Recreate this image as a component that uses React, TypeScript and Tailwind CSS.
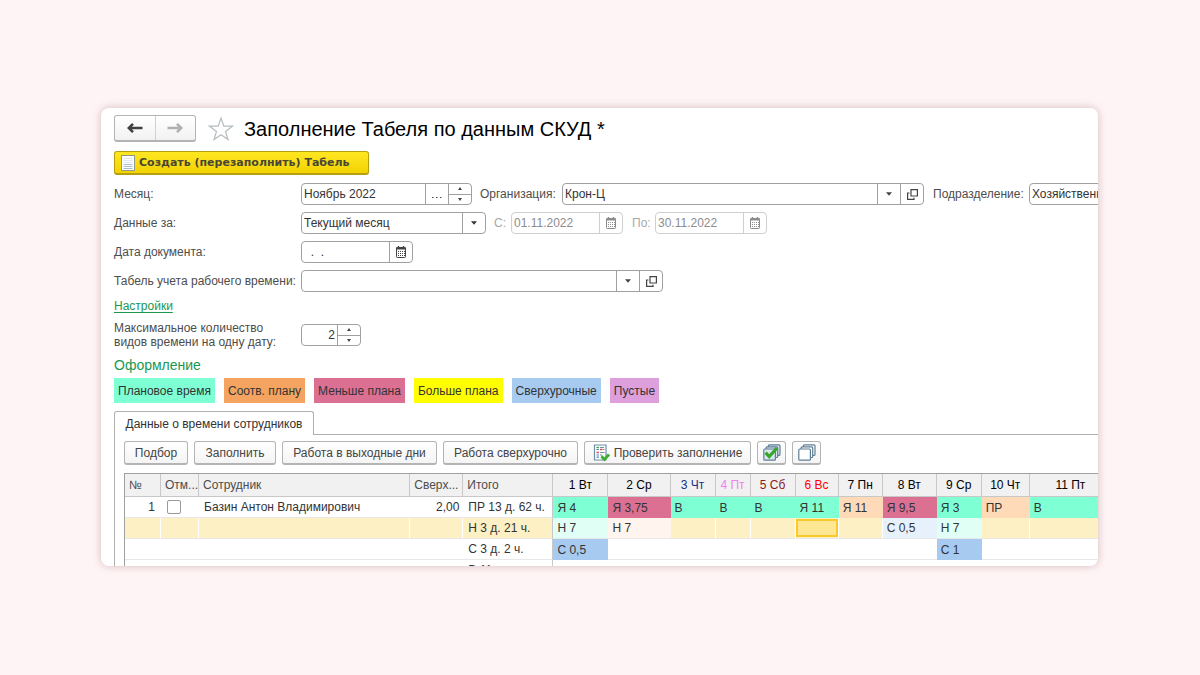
import { useState } from "react";
import type { ReactNode } from "react";
import clsx from "clsx";

const legend = [
  { label: "Плановое время", color: "bg-[#7fffd4]" },
  { label: "Соотв. плану", color: "bg-[#f4a460]" },
  { label: "Меньше плана", color: "bg-[#db7093]" },
  { label: "Больше плана", color: "bg-[#ffff00]" },
  { label: "Сверхурочные", color: "bg-[#a6caf0]" },
  { label: "Пустые", color: "bg-[#dda0dd]" },
];

const days = [
  { label: "1 Вт", color: "text-black", width: "w-[55px]" },
  { label: "2 Ср", color: "text-black", width: "w-[62px]" },
  { label: "3 Чт", color: "text-[#1c2f8c]", width: "w-[45px]" },
  { label: "4 Пт", color: "text-[#ee82ee]", width: "w-[35px]" },
  { label: "5 Сб", color: "text-[#8b1a1a]", width: "w-[45px]" },
  { label: "6 Вс", color: "text-[#ff0000]", width: "w-[43px]" },
  { label: "7 Пн", color: "text-black", width: "w-[44px]" },
  { label: "8 Вт", color: "text-black", width: "w-[54px]" },
  { label: "9 Ср", color: "text-black", width: "w-[45px]" },
  { label: "10 Чт", color: "text-black", width: "w-[48px]" },
  { label: "11 Пт", color: "text-black", width: "w-[82px]" },
];

const MINT = "bg-[#7fffd4]";
const ROSE = "bg-[#db7093]";
const PEACH = "bg-[#ffdab9]";
const BLUE = "bg-[#a6caf0]";

type Cell = { text?: string; bg?: string; active?: boolean };

const planned: Cell[] = [
  { text: "Я 4", bg: MINT },
  { text: "Я 3,75", bg: ROSE },
  { text: "В", bg: MINT },
  { text: "В", bg: MINT },
  { text: "В", bg: MINT },
  { text: "Я 11", bg: MINT },
  { text: "Я 11", bg: PEACH },
  { text: "Я 9,5", bg: ROSE },
  { text: "Я 3", bg: MINT },
  { text: "ПР", bg: PEACH },
  { text: "В", bg: MINT },
];

const night: Cell[] = [
  { text: "Н 7", bg: "bg-[#e0fff5]" },
  { text: "Н 7", bg: "bg-[#fff5ee]" },
  {},
  {},
  {},
  { active: true },
  {},
  { text: "С 0,5", bg: "bg-[#e7f1fb]" },
  { text: "Н 7", bg: "bg-[#e0fff5]" },
  {},
  {},
];

const overtime: Cell[] = [
  { text: "С 0,5", bg: BLUE },
  {},
  {},
  {},
  {},
  {},
  {},
  {},
  { text: "С 1", bg: BLUE },
  {},
  {},
];

const rows = [
  { total: "ПР 13 д. 62 ч.", cells: planned },
  { total: "Н 3 д. 21 ч.", cells: night, selected: true },
  { total: "С 3 д. 2 ч.", cells: overtime },
  { total: "В 11 д.", cells: days.map((): Cell => ({})) },
];

/* ---- icons ---- */

function ArrowIcon({ right }: { right?: boolean }) {
  return (
    <svg width="16" height="12" viewBox="0 0 16 12" className={right ? "rotate-180" : ""}>
      <path d="M6 1.8 1.8 6 6 10.2M2 6h13.5" fill="none" stroke="currentColor" strokeWidth="2.6" />
    </svg>
  );
}

function StarIcon() {
  return (
    <svg width="26" height="26" viewBox="0 0 26 26">
      <path
        d="M13 2 15.8 10.1 24.4 10.2 17.5 15.4 20 23.6 13 18.7 6 23.6 8.5 15.4 1.6 10.2 10.2 10.1Z"
        fill="#fff"
        stroke="#b4bcc0"
        strokeWidth="1.2"
      />
    </svg>
  );
}

function SheetIcon() {
  return (
    <svg width="14" height="16" viewBox="0 0 14 16">
      <rect x="0.5" y="0.5" width="13" height="15" fill="#fdfeff" stroke="#8f9a8c" />
      <path d="M2.5 3.5h9M2.5 5.5h9M2.5 7.5h9" stroke="#dfe7ee" />
      <path d="M2.5 9.5h9M2.5 11.5h9M2.5 13.5h9" stroke="#a9bccd" />
    </svg>
  );
}

function CalendarIcon() {
  return (
    <svg width="12" height="12" viewBox="0 0 12 12">
      <path d="M3.5 0v2M8.5 0v2" stroke="currentColor" strokeWidth="1.4" />
      <rect x="1.5" y="1.5" width="9" height="10" rx="0.8" fill="none" stroke="currentColor" />
      <path d="M1 2.5h10" stroke="currentColor" strokeWidth="2" />
      <path d="M3 5.5h7M3 7.5h7M3 9.5h7" stroke="currentColor" strokeDasharray="1 1" />
    </svg>
  );
}

function OpenIcon() {
  return (
    <svg width="11" height="11" viewBox="0 0 11 11">
      <path d="M4 .6h6.4V7H4Z" fill="none" stroke="currentColor" strokeWidth="1.2" />
      <path d="M2.5 4H.6v6.4H7V8.8" fill="none" stroke="currentColor" strokeWidth="1.2" />
    </svg>
  );
}

function CaretIcon() {
  return (
    <svg width="6" height="4" viewBox="0 0 6 4">
      <path d="M0 .3h6L3 3.7Z" fill="currentColor" />
    </svg>
  );
}

function CheckDocIcon() {
  return (
    <svg width="17" height="18" viewBox="0 0 17 18">
      <path d="M1.5 1h11.5v15H1.5Z" fill="#fff" stroke="#6f8fa6" strokeWidth="1.2" />
      <path d="M3.5 3.5H6" stroke="#3aa23a" strokeWidth="1.4" />
      <path d="M7 5.5h2.5M3.5 8.5H6" stroke="#d0545a" strokeWidth="1.4" />
      <path d="M3.5 5.5H6M3.5 11H6M3.5 13.2H6" stroke="#5b86b8" strokeWidth="1.2" />
      <path d="M7 3.5h4M10 5.5h1.5M7 8.5h4.5M7 11h2" stroke="#6d8db0" />
      <path d="m8.4 12.2 3 3.2L16 10.4" fill="none" stroke="#3fae2f" strokeWidth="2.8" />
    </svg>
  );
}

function StackIcon({ checked }: { checked?: boolean }) {
  return (
    <svg width="18" height="17" viewBox="0 0 18 17">
      <g fill={checked ? "#dbe6ee" : "#fff"} stroke="#5f7f96" strokeWidth="1.2">
        <rect x="5.4" y=".8" width="11.6" height="10.6" rx="1" />
        <rect x="3.1" y="2.9" width="11.6" height="10.6" rx="1" />
        <rect x=".8" y="5" width="11.6" height="11.2" rx="1" />
      </g>
      {checked && (
        <path d="m2.6 8.6 3.6 4L14 4" fill="none" stroke="#35a82a" strokeWidth="3.2" />
      )}
    </svg>
  );
}

/* ---- form pieces ---- */

function Field({
  className,
  disabled,
  children,
}: {
  className: string;
  disabled?: boolean;
  children: ReactNode;
}) {
  return (
    <div
      className={clsx(
        "flex h-[22px] shrink-0 overflow-hidden rounded-[4px] border bg-white",
        disabled ? "border-[#cfcfcf] text-[#8c8c8c]" : "border-[#a0a0a0] text-[#333]",
        className
      )}
    >
      {children}
    </div>
  );
}

function SideButton({
  label,
  disabled,
  children,
}: {
  label: string;
  disabled?: boolean;
  children: ReactNode;
}) {
  return (
    <button
      type="button"
      aria-label={label}
      disabled={disabled}
      className={clsx(
        "flex w-[23px] shrink-0 items-center justify-center border-l",
        disabled ? "border-[#cfcfcf]" : "border-[#a0a0a0] text-[#444]"
      )}
    >
      {children}
    </button>
  );
}

function Spinner({ onStep }: { onStep?: (step: number) => void }) {
  return (
    <div className="flex w-[23px] shrink-0 flex-col border-l border-[#a0a0a0] text-[#444]">
      <button
        type="button"
        aria-label="Увеличить"
        onClick={() => onStep?.(1)}
        className="flex flex-1 items-center justify-center border-b border-[#a0a0a0]"
      >
        <svg width="4" height="3" viewBox="0 0 4 3">
          <path d="M0 3h4L2 0Z" fill="currentColor" />
        </svg>
      </button>
      <button
        type="button"
        aria-label="Уменьшить"
        onClick={() => onStep?.(-1)}
        className="flex flex-1 items-center justify-center"
      >
        <svg width="4" height="3" viewBox="0 0 4 3">
          <path d="M0 0h4L2 3Z" fill="currentColor" />
        </svg>
      </button>
    </div>
  );
}

function DateField({
  id,
  value,
  disabled,
}: {
  id: string;
  value: string;
  disabled?: boolean;
}) {
  return (
    <Field className="w-28" disabled={disabled}>
      <input
        id={id}
        defaultValue={value}
        disabled={disabled}
        className="min-w-0 flex-1 px-0.5 outline-none"
      />
      <SideButton label="Выбрать дату" disabled={disabled}>
        <CalendarIcon />
      </SideButton>
    </Field>
  );
}

function ToolButton({
  className,
  label,
  children,
}: {
  className?: string;
  label?: string;
  children: ReactNode;
}) {
  return (
    <button
      type="button"
      aria-label={label}
      className={clsx(
        "flex h-6 shrink-0 items-center justify-center gap-1 rounded-[3px] border border-b-2 border-[#b4b4b4] bg-linear-to-b from-white to-[#f4f4f4] whitespace-nowrap text-[#444]",
        className
      )}
    >
      {children}
    </button>
  );
}

const rowLabel = "w-[187px] shrink-0 whitespace-nowrap";
const headCell = "border-r border-[#c8c8c8] px-1 text-left font-normal whitespace-nowrap";

export default function App() {
  const [maxKinds, setMaxKinds] = useState(2);
  const [marked, setMarked] = useState(false);

  return (
    <main className="flex h-screen flex-col bg-[#fff4f5] pt-[108px] pr-[102px] pb-[109px] pl-[101px] font-['Liberation_Sans',sans-serif] text-[12px] leading-4 text-[#4d4d4d]">
      <div className="min-h-0 flex-1 overflow-hidden rounded-lg bg-white pt-[7px] pl-[13px] shadow-[0_0_8px_rgba(110,60,70,0.3)]">
        {/* Title */}
        <div className="flex h-[27px] items-center">
          <div className="flex h-[27px] w-[82px] rounded-[3px] border border-b-2 border-[#b4b4b4] bg-linear-to-b from-white to-[#f2f2f2]">
            <button
              type="button"
              aria-label="Назад"
              className="flex flex-1 items-center justify-center border-r border-[#d0d0d0] text-[#404040]"
            >
              <ArrowIcon />
            </button>
            <button
              type="button"
              aria-label="Вперед"
              className="flex flex-1 items-center justify-center text-[#b0b0b0]"
            >
              <ArrowIcon right />
            </button>
          </div>
          <button type="button" aria-label="В избранное" className="mr-2.5 ml-3">
            <StarIcon />
          </button>
          <h1 className="text-[20px] leading-6 whitespace-nowrap text-black">
            Заполнение Табеля по данным СКУД *
          </h1>
        </div>

        <button
          type="button"
          className="mt-[9px] flex h-6 w-[255px] items-center gap-1 rounded-[3px] border border-b-2 border-[#b79f10] bg-linear-to-b from-[#ffe720] to-[#f2d300] pl-1.5 font-['DejaVu_Sans',sans-serif] text-[11px] font-bold whitespace-nowrap text-[#4a4636]"
        >
          <SheetIcon />
          Создать (перезаполнить) Табель
        </button>

        {/* Parameters */}
        <div className="mt-2 flex flex-col gap-[7px]">
          <div className="flex items-center">
            <label htmlFor="month" className={rowLabel}>
              Месяц:
            </label>
            <Field className="w-[171px]">
              <input
                id="month"
                defaultValue="Ноябрь 2022"
                className="min-w-0 flex-1 px-0.5 outline-none"
              />
              <SideButton label="Выбрать месяц">
                <svg width="10" height="10" viewBox="0 0 10 10">
                  <path d="M0 8.5h1.5M4 8.5h1.5M8 8.5h1.5" stroke="currentColor" />
                </svg>
              </SideButton>
              <Spinner />
            </Field>
            <label htmlFor="org" className="w-[90px] shrink-0 pl-2">
              Организация:
            </label>
            <Field className="w-[362px]">
              <input
                id="org"
                defaultValue="Крон-Ц"
                className="min-w-0 flex-1 px-0.5 outline-none"
              />
              <SideButton label="Выбрать организацию">
                <CaretIcon />
              </SideButton>
              <SideButton label="Открыть организацию">
                <OpenIcon />
              </SideButton>
            </Field>
            <label htmlFor="dept" className="w-[105px] shrink-0 pl-[9px]">
              Подразделение:
            </label>
            <Field className="w-[200px]">
              <input
                id="dept"
                defaultValue="Хозяйственный отдел"
                className="min-w-0 flex-1 px-0.5 outline-none"
              />
            </Field>
          </div>

          <div className="flex items-center">
            <label htmlFor="source" className={rowLabel}>
              Данные за:
            </label>
            <Field className="w-[185px]">
              <select id="source" className="min-w-0 flex-1 appearance-none px-0.5 outline-none">
                <option>Текущий месяц</option>
                <option>Прошлый месяц</option>
              </select>
              <span className="flex w-[23px] items-center justify-center border-l border-[#a0a0a0]">
                <CaretIcon />
              </span>
            </Field>
            <label htmlFor="from" className="w-[25px] shrink-0 pl-2 text-[#a8a8a8]">
              С:
            </label>
            <DateField id="from" value="01.11.2022" disabled />
            <label htmlFor="to" className="w-8 shrink-0 pl-[9px] text-[#a8a8a8]">
              По:
            </label>
            <DateField id="to" value="30.11.2022" disabled />
          </div>

          <div className="flex items-center">
            <label htmlFor="docdate" className={rowLabel}>
              Дата документа:
            </label>
            <DateField id="docdate" value="  .  ." />
          </div>

          <div className="flex items-center">
            <label htmlFor="sheet" className={rowLabel}>
              Табель учета рабочего времени:
            </label>
            <Field className="w-[362px]">
              <input id="sheet" className="min-w-0 flex-1 px-0.5 outline-none" />
              <SideButton label="Выбрать табель">
                <CaretIcon />
              </SideButton>
              <SideButton label="Открыть табель">
                <OpenIcon />
              </SideButton>
            </Field>
          </div>
        </div>

        <div className="mt-1.5 flex">
          <a href="#settings" className="text-[#1a9850] underline underline-offset-2">
            Настройки
          </a>
        </div>

        <div className="mt-[7px] flex items-center">
          <label htmlFor="kinds" className="w-[187px] shrink-0 leading-[14px]">
            Максимальное количество
            <br />
            видов времени на одну дату:
          </label>
          <Field className="w-[60px]">
            <input
              id="kinds"
              value={maxKinds}
              onChange={(e) => setMaxKinds(Number(e.target.value) || 0)}
              className="min-w-0 flex-1 px-0.5 text-right outline-none"
            />
            <Spinner onStep={(step) => setMaxKinds(maxKinds + step)} />
          </Field>
        </div>

        {/* Legend */}
        <h2 className="mt-[7px] text-[14px] leading-[18px] text-[#1a9850]">Оформление</h2>
        <div className="mt-1 flex gap-[9px]">
          {legend.map((item) => (
            <span
              key={item.label}
              className={clsx(
                "flex h-[25px] shrink-0 items-center px-1 whitespace-nowrap text-[#333]",
                item.color
              )}
            >
              {item.label}
            </span>
          ))}
        </div>

        {/* Tab */}
        <div className="mt-2 flex">
          <button
            type="button"
            className="h-6 w-[200px] shrink-0 rounded-t-[3px] border border-b-0 border-[#b0b0b0] whitespace-nowrap text-[#333]"
          >
            Данные о времени сотрудников
          </button>
          <div className="flex-1 border-b border-[#b0b0b0]" />
        </div>

        <div className="border-l border-[#b0b0b0] pt-1.5 pb-10 pl-[9px]">
          <div className="flex gap-1.5">
            <ToolButton className="w-16">Подбор</ToolButton>
            <ToolButton className="w-[82px]">Заполнить</ToolButton>
            <ToolButton className="w-[155px]">Работа в выходные дни</ToolButton>
            <ToolButton className="w-[135px]">Работа сверхурочно</ToolButton>
            <ToolButton className="w-[167px]">
              <CheckDocIcon />
              Проверить заполнение
            </ToolButton>
            <ToolButton className="w-[29px]" label="Отметить все">
              <StackIcon checked />
            </ToolButton>
            <ToolButton className="w-[29px]" label="Снять отметки">
              <StackIcon />
            </ToolButton>
          </div>

          {/* Timesheet */}
          <div className="mt-2 w-[988px] border-t border-l border-[#a0a0a0]">
            <table className="w-[987px] table-fixed border-separate border-spacing-0">
              <thead>
                <tr className="h-[23px] bg-[#f1f1f1]">
                  <th className={clsx(headCell, "w-9 border-b")}>№</th>
                  <th className={clsx(headCell, "w-[38px] border-b")}>Отм...</th>
                  <th className={clsx(headCell, "w-[211px] border-b")}>Сотрудник</th>
                  <th className={clsx(headCell, "w-[53px] border-b")}>Сверх...</th>
                  <th className={clsx(headCell, "w-[90px] border-b")}>Итого</th>
                  {days.map((day) => (
                    <th
                      key={day.label}
                      className={clsx(
                        "border-r border-b border-[#c8c8c8] p-0 text-center font-normal whitespace-nowrap",
                        day.color,
                        day.width
                      )}
                    >
                      {day.label}
                    </th>
                  ))}
                </tr>
              </thead>
              <tbody className="text-[#333]">
                {rows.map((row, i) => {
                  const side = clsx(
                    "border-b border-[#e8e8e8] p-0",
                    row.selected && "border-r border-r-white bg-[#fdf0c4]"
                  );
                  return (
                    <tr key={row.total} className="h-[21px]">
                      <td className={clsx(side, "text-right")}>
                        <span className="pr-1.5">{i === 0 && "1"}</span>
                      </td>
                      <td className={side}>
                        {i === 0 && (
                          <input
                            type="checkbox"
                            aria-label="Отметить сотрудника"
                            checked={marked}
                            onChange={() => setMarked(!marked)}
                            className="ml-1.5 block size-[14px] appearance-none rounded-[2px] border border-[#999] bg-white checked:bg-[#8a8a8a]"
                          />
                        )}
                      </td>
                      <td className={side}>
                        <span className="pl-[5px]">{i === 0 && "Базин Антон Владимирович"}</span>
                      </td>
                      <td className={clsx(side, "text-right")}>
                        <span className="pr-1">{i === 0 && "2,00"}</span>
                      </td>
                      <td className="border-r border-b border-[#c8c8c8] border-b-[#e8e8e8] p-0">
                        <div
                          className={clsx(
                            "flex h-5 items-center pl-[5px]",
                            row.selected && "bg-[#fdf0c4]"
                          )}
                        >
                          {row.total}
                        </div>
                      </td>
                      {row.cells.map((cell, j) => (
                        <td
                          key={j}
                          className={clsx(
                            "p-0",
                            cell.bg,
                            !cell.bg && row.selected && "border-r border-r-white bg-[#fdf0c4]",
                            (!cell.bg || row.selected) && "border-b border-b-[#e8e8e8]"
                          )}
                        >
                          <div
                            className={clsx(
                              "flex items-center pl-1 whitespace-nowrap",
                              cell.active
                                ? "h-[18px] border-2 border-[#f7c92b] bg-[#fee792]"
                                : "h-5"
                            )}
                          >
                            {cell.text}
                          </div>
                        </td>
                      ))}
                    </tr>
                  );
                })}
              </tbody>
            </table>
          </div>
        </div>
      </div>
    </main>
  );
}
